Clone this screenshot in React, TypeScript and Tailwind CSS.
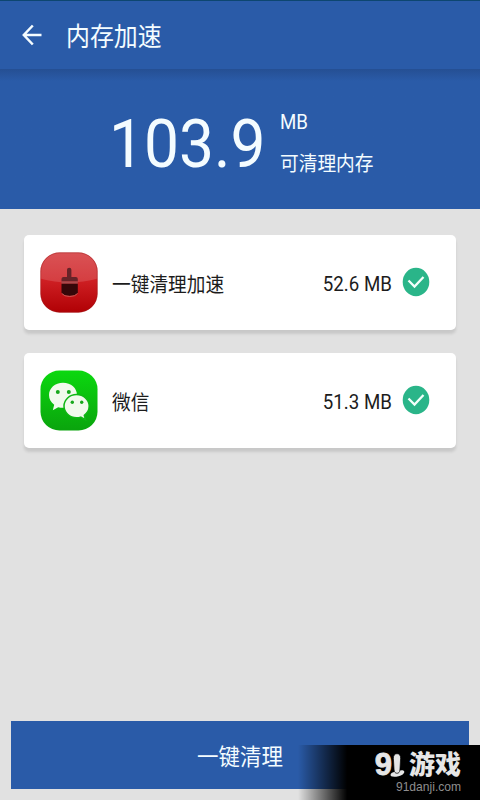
import type { ReactNode } from "react";

// Memory booster — header, reclaimable total, and the apps to be cleaned.

type AppEntry = {
  name: string;
  size: string;
  icon: ReactNode;
};

function BrushIcon() {
  return (
    <svg viewBox="0 0 58 62" className="h-[61px] w-[58px] shrink-0" preserveAspectRatio="none" aria-hidden>
      <defs>
        <linearGradient id="brush-bg" x1="0" y1="0" x2="0" y2="1">
          <stop offset="0" stopColor="#d4373a" />
          <stop offset="0.45" stopColor="#cf2024" />
          <stop offset="1" stopColor="#b00004" />
        </linearGradient>
        <clipPath id="brush-clip">
          <rect x="0.5" y="0.5" width="57" height="61" rx="19" ry="19" />
        </clipPath>
      </defs>
      <g clipPath="url(#brush-clip)">
        <rect width="58" height="62" fill="url(#brush-bg)" />
        <path d="M0 0h58v27Q29 35 0 27z" fill="#fff" fillOpacity="0.14" />
      </g>
      <rect x="0.8" y="0.8" width="56.4" height="60.4" rx="19" ry="19" fill="none" stroke="#9d2020" strokeOpacity="0.45" />
      <path d="M27 18q0-2 2.200-2t2.200 2v7.500h4.400q2 0 2 2V30H21.500v-2.500q0-2 2-2H27z" fill="#672328" />
      <path d="M21.500 30h16.300v2.300H21.500z" fill="#a94a4c" />
      <path d="M21.500 32.300h16.300v9q-1.500 3.200-8.200 3.200t-8.100-3.200z" fill="#350709" />
      <path d="M21.800 42.200q2.300 3 7.900 3t7.800-3" fill="none" stroke="#cf5a55" />
    </svg>
  );
}

function WeChatIcon() {
  return (
    <svg viewBox="0 0 58 62" className="h-[61px] w-[58px] shrink-0" preserveAspectRatio="none" aria-hidden>
      <defs>
        <linearGradient id="wechat-bg" x1="0" y1="0" x2="0" y2="1">
          <stop offset="0" stopColor="#0bd80f" />
          <stop offset="1" stopColor="#0aa40d" />
        </linearGradient>
      </defs>
      <rect x="0.5" y="0.5" width="57" height="61" rx="19" ry="19" fill="url(#wechat-bg)" />
      <path d="M23 13c-8 0-14 5.500-14 12.500 0 4.200 2 7.600 5.200 9.900L12.800 41l5.400-3.200c1.600.4 3.100.6 4.800.6 8 0 14-5.800 14-12.900S31 13 23 13z" fill="#f1faec" />
      <path d="M36.500 25c-7 0-12.500 5.200-12.500 11.700s5.500 11.800 12.500 11.800c1.500 0 2.900-.2 4.200-.6l4.800 2.600-1.200-4.500c3-2.200 4.900-5.400 4.900-9.300C49.200 30.200 43.500 25 36.500 25z" fill="#f1faec" stroke="#0fb714" strokeWidth="1.500" />
      <g fill="#17a81b">
        <circle cx="17.800" cy="22.300" r="2" />
        <circle cx="28.800" cy="22.300" r="2" />
        <circle cx="32.300" cy="32.800" r="1.700" />
        <circle cx="41.700" cy="32.800" r="1.700" />
      </g>
    </svg>
  );
}

const APPS: AppEntry[] = [
  { name: "一键清理加速", size: "52.6 MB", icon: <BrushIcon /> },
  { name: "微信", size: "51.3 MB", icon: <WeChatIcon /> },
];

function CheckBadge() {
  return (
    <svg viewBox="0 0 28 30" className="mb-px h-[30px] w-7 shrink-0" aria-hidden>
      <ellipse cx="14" cy="15" rx="13.300" ry="14.200" fill="#2ab589" />
      <path d="M6.500 13.500l6 6 9-9.500" fill="none" stroke="#f2fffb" strokeWidth="2.300" />
    </svg>
  );
}

function AppCard({ name, size, icon }: AppEntry) {
  return (
    <div className="flex h-[95px] items-center rounded-[5px] bg-white pl-4 pr-[26px] shadow-[0_4px_3px_rgba(0,0,0,0.11)]">
      {icon}
      <span className="ml-[14px] mt-1 origin-left scale-x-[0.935] text-[20px] leading-7 text-[#1c1c1c]">{name}</span>
      <span className="ml-auto mr-[10px] mt-[3px] origin-right scale-x-[0.935] text-[20px] leading-7 text-[#1c1c1c]">
        {size}
      </span>
      <CheckBadge />
    </div>
  );
}

function Watermark() {
  return (
    <div className="absolute bottom-0 right-0 flex h-[55px] w-[182px] flex-col items-end bg-linear-to-r from-transparent to-black to-[27%] pr-[19px] pt-[7px] text-[#e6e6e6]">
      <div className="flex h-[26px] items-center">
        <span className="-mr-0.5 font-['Liberation_Sans'] text-[31px] font-bold leading-[26px] [-webkit-text-stroke:0.8px_#e6e6e6]">9</span>
        {/* bowling-pin shaped "1" standing on its foot */}
        <svg viewBox="0 0 15 25" className="mr-[4px] h-[25px] w-[15px]" aria-label="1">
          <path d="M2 19.800c2.500-1 8.500-3 11.300-2.300 1.700.5 1.200 2.700-.6 3.900-2.700 1.800-7.700 2.700-10.500 2.200-2.200-.4-2-3 -.2-3.800z" fill="currentColor" />
          <path d="M7 .7c2.500 0 3.800 2 3.600 5L9.900 17c-.2 2.200-1.300 3.300-2.900 3.300S4.300 19.200 4.100 17L3.400 5.700C3.200 2.700 4.500.7 7 .7z" fill="currentColor" stroke="#000" strokeWidth="0.700" />
        </svg>
        <span className="text-[26px] font-black leading-[26px]">游戏</span>
      </div>
      <div className="mt-0.5 origin-right scale-x-[0.93] font-['Liberation_Sans'] text-[13px] leading-[14px] text-[#8e8e8e]">
        91danji.com
      </div>
    </div>
  );
}

export default function App() {
  return (
    <div className="relative flex h-[800px] w-[480px] flex-col overflow-hidden bg-[#e1e1e1] font-['Roboto','Noto_Sans_CJK_SC',sans-serif]">
      <header className="flex h-[69px] shrink-0 items-center border-t border-[#0d4670] bg-[#2a5ba8] pl-[22px] text-[#f4fcff]">
        <svg viewBox="0 0 20 22" className="h-[22px] w-5" fill="none" stroke="currentColor" strokeWidth="2.500" aria-hidden>
          <path d="M19.500 11H2M10.800 1.500L1.800 11l9 9.500" />
        </svg>
        <h1 className="ml-6 mt-[3px] origin-left scale-x-[0.92] text-[26px] leading-9">内存加速</h1>
      </header>

      <section className="flex h-[140px] shrink-0 bg-[#2a5ba8] bg-linear-to-b from-[#254f93] to-[#2a5ba8] to-[12px] pl-[109px] text-[#f4fcff]">
        <div className="mt-[35px] w-[171px] origin-left scale-x-[0.93] text-[67px] leading-20">103.9</div>
        <div className="mt-[39px] origin-left scale-x-[0.935] text-[20px] leading-7">
          <div>MB</div>
          <div className="mt-[14px]">可清理内存</div>
        </div>
      </section>

      <main className="flex flex-col gap-[23px] px-6 pt-[26px]">
        {APPS.map((app) => (
          <AppCard key={app.name} {...app} />
        ))}
      </main>

      <button className="mx-[11px] mb-[11px] mt-auto h-[68px] shrink-0 bg-[#2a5ba8] pt-1.5 text-[23px] text-[#f4fcff]">
        <span className="inline-block scale-x-[0.935]">一键清理</span>
      </button>

      <Watermark />
    </div>
  );
}
